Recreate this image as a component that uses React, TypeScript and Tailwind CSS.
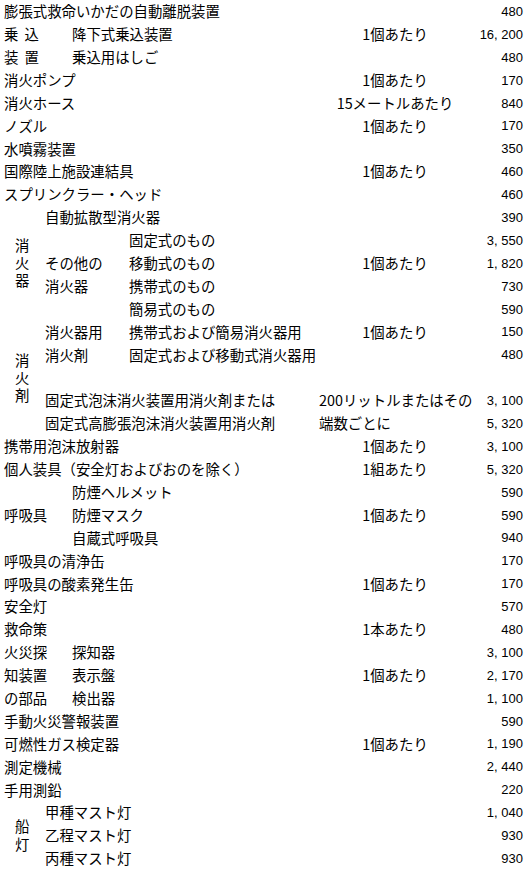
import React from "react";

type RowProps = {
  left?: React.ReactNode;
  unit?: React.ReactNode;
  price?: string;
  inset?: boolean;
  unitLeft?: boolean;
};

function Row({ left, unit, price, inset, unitLeft }: RowProps) {
  return (
    <div className="flex h-[22.9px] items-center whitespace-nowrap">
      <div className={inset ? "flex w-[276px] pl-[2px]" : "flex w-[319px] pl-[4px]"}>{left}</div>
      <div className={unitLeft ? "w-[152px] text-left" : "w-[152px] text-center"}>{unit}</div>
      <div className="flex-1 pr-[5px] text-right font-['Liberation_Sans',sans-serif] text-[13px]">{price}</div>
    </div>
  );
}

function Two({ a, b, w }: { a: React.ReactNode; b: React.ReactNode; w: "68" | "84" }) {
  return (
    <>
      <span className={w === "68" ? "w-[68px]" : "w-[84px]"}>{a}</span>
      <span>{b}</span>
    </>
  );
}

function VLabel({ text }: { text: string }) {
  return (
    <div className="flex w-[43px] flex-col items-center justify-center">
      <span className="pt-[3.5px] tracking-[3.5px] [writing-mode:vertical-rl]">{text}</span>
    </div>
  );
}

const per = "1個あたり";

export default function App() {
  return (
    <div className="w-[528px] bg-white font-['Noto_Sans_CJK_JP',sans-serif] text-[14.4px] leading-none text-black">
      <Row left="膨張式救命いかだの自動離脱装置" price="480" />
      <Row
        left={<Two w="68" a={<span className="flex gap-[6px]"><span>乗</span><span>込</span></span>} b="降下式乗込装置" />}
        unit={per}
        price="16, 200"
      />
      <Row
        left={<Two w="68" a={<span className="flex gap-[6px]"><span>装</span><span>置</span></span>} b="乗込用はしご" />}
        price="480"
      />
      <Row left="消火ポンプ" unit={per} price="170" />
      <Row left="消火ホース" unit="15メートルあたり" price="840" />
      <Row left="ノズル" unit={per} price="170" />
      <Row left="水噴霧装置" price="350" />
      <Row left="国際陸上施設連結具" unit={per} price="460" />
      <Row left="スプリンクラー・ヘッド" price="460" />

      <div className="flex">
        <VLabel text="消火器" />
        <div className="flex-1">
          <Row inset left="自動拡散型消火器" price="390" />
          <Row inset left={<Two w="84" a="" b="固定式のもの" />} price="3, 550" />
          <Row inset left={<Two w="84" a="その他の" b="移動式のもの" />} unit={per} price="1, 820" />
          <Row inset left={<Two w="84" a="消火器" b="携帯式のもの" />} price="730" />
          <Row inset left={<Two w="84" a="" b="簡易式のもの" />} price="590" />
        </div>
      </div>

      <div className="flex">
        <VLabel text="消火剤" />
        <div className="flex-1">
          <Row inset left={<Two w="84" a="消火器用" b="携帯式および簡易消火器用" />} unit={per} price="150" />
          <Row inset left={<Two w="84" a="消火剤" b="固定式および移動式消火器用" />} price="480" />
          <Row inset />
          <Row inset left="固定式泡沫消火装置用消火剤または" unit="200リットルまたはその" unitLeft price="3, 100" />
          <Row inset left="固定式高膨張泡沫消火装置用消火剤" unit="端数ごとに" unitLeft price="5, 320" />
        </div>
      </div>

      <Row left="携帯用泡沫放射器" unit={per} price="3, 100" />
      <Row left="個人装具（安全灯およびおのを除く）" unit="1組あたり" price="5, 320" />
      <Row left={<Two w="68" a="" b="防煙ヘルメット" />} price="590" />
      <Row left={<Two w="68" a="呼吸具" b="防煙マスク" />} unit={per} price="590" />
      <Row left={<Two w="68" a="" b="自蔵式呼吸具" />} price="940" />
      <Row left="呼吸具の清浄缶" price="170" />
      <Row left="呼吸具の酸素発生缶" unit={per} price="170" />
      <Row left="安全灯" price="570" />
      <Row left="救命策" unit="1本あたり" price="480" />
      <Row left={<Two w="68" a="火災探" b="探知器" />} price="3, 100" />
      <Row left={<Two w="68" a="知装置" b="表示盤" />} unit={per} price="2, 170" />
      <Row left={<Two w="68" a="の部品" b="検出器" />} price="1, 100" />
      <Row left="手動火災警報装置" price="590" />
      <Row left="可燃性ガス検定器" unit={per} price="1, 190" />
      <Row left="測定機械" price="2, 440" />
      <Row left="手用測鉛" price="220" />

      <div className="flex">
        <VLabel text="船灯" />
        <div className="flex-1">
          <Row inset left="甲種マスト灯" price="1, 040" />
          <Row inset left="乙程マスト灯" price="930" />
          <Row inset left="丙種マスト灯" price="930" />
        </div>
      </div>
    </div>
  );
}
